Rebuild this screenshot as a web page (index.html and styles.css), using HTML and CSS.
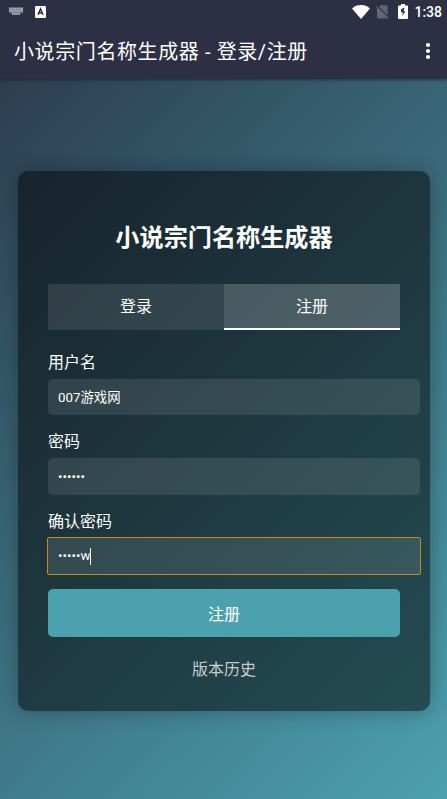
FILE: index.html
```html
<!DOCTYPE html>
<html lang="zh-CN">
  <head>
    <meta charset="UTF-8" />
    <meta name="viewport" content="width=device-width, initial-scale=1.0" />
    <title>小说宗门名称生成器 - 登录/注册</title>
    <link rel="stylesheet" href="styles.css">
  </head>
  <body>
    <header class="app-header">
      <div class="status-bar">
        <div class="status-left">
          <svg width="14" height="9" viewBox="0 0 14 9">
            <path d="M0 0.5h14v5H0z" fill="#a5a5ad" />
            <path d="M2 5.5h10v1H2zM3 6.5h8v1.6H3z" fill="#94949e" />
            <path d="M1 2h12M1.5 4h12" stroke="#55566a" stroke-width="0.8" stroke-dasharray="1 1" />
          </svg>
          <svg width="11" height="12" viewBox="0 0 11 12">
            <rect width="11" height="12" rx="1" fill="#fff" />
            <path d="M3 8.8L5.5 3L8 8.8M3.8 7.1h3.4" fill="none" stroke="#2d2f44" stroke-width="1.5" />
          </svg>
        </div>
        <div class="status-right">
          <svg class="wifi" width="18" height="14" viewBox="0 0 18 14">
            <path d="M9 14L0 3.4C2.4 1.2 5.5 0 9 0s6.6 1.2 9 3.4z" fill="#fff" />
          </svg>
          <svg class="sim" width="13" height="14" viewBox="0 0 13 14">
            <path d="M4.500 0.300h6a1.200 1.200 0 0 1 1.200 1.200V12.300a1.200 1.200 0 0 1-1.200 1.200H2.200A1.200 1.200 0 0 1 1 12.300V3.500z" fill="#626373" />
            <path d="M0.300 0.300L12.900 13" stroke="#2d2f44" stroke-width="1.600" />
            <path d="M0 1.200L12.300 13.700" stroke="#777886" stroke-width="1" />
          </svg>
          <svg class="battery" width="10" height="15" viewBox="0 0 10 15">
            <path d="M3 0h4v1.5h2a1 1 0 0 1 1 1V14a1 1 0 0 1-1 1H1a1 1 0 0 1-1-1V2.5a1 1 0 0 1 1-1h2z" fill="#fff" />
            <path d="M6.7 3.5L2.8 5.3L3.3 8.5L5 8.2L4 12.5L7.3 7.2L5.5 7z" fill="#2d2f44" />
          </svg>
          <span class="clock">1:38</span>
        </div>
      </div>
      <div class="title-bar">
        <span class="app-title">小说宗门名称生成器 - 登录/注册</span>
        <svg width="6" height="18" viewBox="0 0 6 18">
          <circle cx="3" cy="3" r="2.1" fill="#fff" />
          <circle cx="3" cy="9" r="2.1" fill="#fff" />
          <circle cx="3" cy="15" r="2.1" fill="#fff" />
        </svg>
      </div>
    </header>

    <main class="page">
      <div class="container">
        <h1>小说宗门名称生成器</h1>
        <div class="tabs">
          <div class="tab">登录</div>
          <div class="tab active">注册</div>
        </div>
        <form class="register-form">
          <div class="form-group">
            <label for="username">用户名</label>
            <input type="text" id="username" value="007游戏网" />
          </div>
          <div class="form-group">
            <label for="password">密码</label>
            <input type="text" id="password" value="••••••" />
          </div>
          <div class="form-group">
            <label for="confirm">确认密码</label>
            <div class="focused">
              <input type="text" id="confirm" value="•••••w" />
              <span class="caret"></span>
            </div>
          </div>
          <button type="button">注册</button>
        </form>
        <a class="history">版本历史</a>
      </div>
    </main>
  </body>
</html>
```

FILE: styles.css
```css
body {
  font-family: Roboto, "Noto Sans CJK SC", sans-serif;
  color: #fff;
  margin: 0;
  height: 100vh;
  display: flex;
  flex-direction: column;
  overflow: hidden;
}

.app-header {
  position: relative;
  height: 79px;
  flex-shrink: 0;
  background: #2d2f44;
  box-shadow: 0 1px 3px rgba(0, 0, 0, 0.4);
}

.status-bar {
  height: 23px;
  display: flex;
  justify-content: space-between;
  align-items: center;
  padding: 0 5px 0 9px;
}

.status-left,
.status-right {
  display: flex;
  align-items: center;
}

.status-left {
  gap: 12px;
}

.sim {
  margin-left: 6px;
}

.battery {
  margin-left: 9px;
}

.clock {
  font-size: 14px;
  font-weight: 500;
  line-height: 23px;
  padding-top: 1px;
  margin-left: 6px;
}

.title-bar {
  height: 56px;
  display: flex;
  align-items: center;
  justify-content: space-between;
  padding: 0 16px 0 14px;
}

.app-title {
  font-size: 20px;
  letter-spacing: 0.6px;
  line-height: 56px;
  padding-top: 2px;
}

.page {
  flex-grow: 1;
  padding: 92px 17px 0 18px;
  background: linear-gradient(135deg, #2c3e50, #4ca1af);
}

.container {
  height: 540px;
  padding: 30px;
  box-sizing: border-box;
  border-radius: 10px;
  background: rgba(0, 0, 0, 0.5);
  box-shadow: 0 0 20px rgba(0, 0, 0, 0.3);
}

h1 {
  margin: 19px 0 28px;
  font-size: 24.15px;
  line-height: 36px;
  text-align: center;
}

.tabs {
  display: flex;
  margin-bottom: 21px;
}

.tab {
  flex: 1;
  height: 45.5px;
  box-sizing: border-box;
  line-height: 45px;
  text-align: center;
  background: rgba(255, 255, 255, 0.1);
}

.tab.active {
  background: rgba(255, 255, 255, 0.2);
  border-bottom: 2px solid #fff;
}

.form-group {
  margin-bottom: 15px;
}

label {
  display: block;
  height: 24px;
  line-height: 24px;
  margin-bottom: 4px;
}

input {
  display: block;
  width: calc(100% + 20px);
  height: 36.6px;
  padding: 0 10px;
  box-sizing: border-box;
  border: none;
  border-radius: 5px;
  background: rgba(255, 255, 255, 0.1);
  color: #fff;
  font-family: inherit;
  font-size: 13.33px;
}

.focused {
  position: relative;
}

.focused input {
  outline: 1px solid #c88a14;
  border-radius: 1px;
}

.caret {
  position: absolute;
  left: 42px;
  top: 10px;
  width: 1px;
  height: 17px;
  background: #fff;
}

button {
  display: block;
  width: 100%;
  height: 48px;
  border: none;
  border-radius: 5px;
  background: #4ca1af;
  color: #fff;
  font-family: inherit;
  font-size: 16px;
}

.history {
  display: block;
  margin-top: 21px;
  line-height: 24px;
  text-align: center;
  color: #ccc;
}
```
